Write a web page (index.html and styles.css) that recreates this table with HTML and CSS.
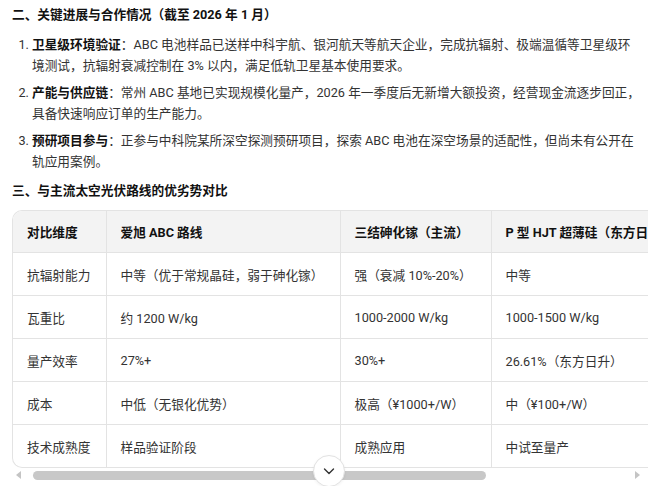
FILE: index.html
```html
<!DOCTYPE html>
<html lang="zh-CN">
<head>
<meta charset="utf-8">
<link rel="stylesheet" href="styles.css">
</head>
<body>
<div class="page">
  <h2 class="sec-title">二、关键进展与合作情况（截至 2026 年 1 月）</h2>
  <ol class="items">
    <li><strong>卫星级环境验证</strong>：ABC 电池样品已送样中科宇航、银河航天等航天企业，完成抗辐射、极端温循等卫星级环境测试，抗辐射衰减控制在 3% 以内，满足低轨卫星基本使用要求。</li>
    <li><strong>产能与供应链</strong>：常州 ABC 基地已实现规模化量产，2026 年一季度后无新增大额投资，经营现金流逐步回正，具备快速响应订单的生产能力。</li>
    <li><strong>预研项目参与</strong>：正参与中科院某所深空探测预研项目，探索 ABC 电池在深空场景的适配性，但尚未有公开在轨应用案例。</li>
  </ol>
  <h2 class="sec-title sec-title--second">三、与主流太空光伏路线的优劣势对比</h2>
  <div class="table-area">
    <div class="table-wrap">
      <table class="cmp">
        <colgroup>
          <col class="c1"><col class="c2"><col class="c3"><col class="c4">
        </colgroup>
        <thead>
          <tr><th>对比维度</th><th>爱旭 ABC 路线</th><th>三结砷化镓（主流）</th><th>P 型 HJT 超薄硅（东方日升）</th></tr>
        </thead>
        <tbody>
          <tr><td>抗辐射能力</td><td>中等（优于常规晶硅，弱于砷化镓）</td><td>强（衰减 10%-20%）</td><td>中等</td></tr>
          <tr><td>瓦重比</td><td>约 1200 W/kg</td><td>1000-2000 W/kg</td><td>1000-1500 W/kg</td></tr>
          <tr><td>量产效率</td><td>27%+</td><td>30%+</td><td>26.61%（东方日升）</td></tr>
          <tr><td>成本</td><td>中低（无银化优势）</td><td>极高（¥1000+/W）</td><td>中（¥100+/W）</td></tr>
          <tr><td>技术成熟度</td><td>样品验证阶段</td><td>成熟应用</td><td>中试至量产</td></tr>
        </tbody>
      </table>
    </div>
    <div class="scrollbar">
      <span class="arrow arrow--left"></span>
      <span class="thumb"></span>
      <span class="arrow arrow--right"></span>
    </div>
    <button class="down-btn" type="button" aria-label="向下">
      <svg width="14" height="14" viewBox="0 0 14 14"><path d="M2.5 5 L7 9.5 L11.5 5" fill="none" stroke="#333" stroke-width="1.4" stroke-linecap="round" stroke-linejoin="round"/></svg>
    </button>
  </div>
</div>
</body>
</html>
```

FILE: styles.css
```css
html, body {
  margin: 0;
  padding: 0;
  background: #ffffff;
  overflow: hidden;
}
body {
  font-family: "Roboto", "Noto Sans CJK SC", sans-serif;
  font-size: 12.7px;
  color: #333333;
}
.page {
  padding: 4px 0 0 12px;
}
.sec-title {
  margin: 0;
  font-size: 12.7px;
  line-height: 22px;
  font-weight: 700;
  color: #111111;
}
.sec-title--second {
  margin-top: 8px;
}
.items {
  margin: 8px 0 0 0;
  padding: 0 8px 0 20px;
}
.items li {
  line-height: 21px;
  margin-bottom: 6px;
}
.items li:last-child {
  margin-bottom: 0;
}
.items li::marker {
  color: #333333;
}
.items strong {
  color: #111111;
  font-weight: 700;
}
.table-area {
  position: relative;
  margin-top: 8px;
  height: 276px;
}
.table-wrap {
  overflow: hidden;
  border: 1px solid #e3e3e3;
  border-right: none;
  border-radius: 10px 0 0 10px;
}
.cmp {
  border-collapse: collapse;
  table-layout: fixed;
  width: 698px;
  white-space: nowrap;
}
.c1 { width: 93px; }
.c2 { width: 234px; }
.c3 { width: 151px; }
.c4 { width: 220px; }
.cmp th,
.cmp td {
  text-align: left;
  padding: 0 14px;
  border-left: 1px solid #e3e3e3;
  border-top: 1px solid #e3e3e3;
  overflow: hidden;
}
.cmp th:first-child,
.cmp td:first-child {
  border-left: none;
}
.cmp thead th {
  border-top: none;
  height: 41px;
  background: #f3f3f3;
  font-weight: 700;
  color: #111111;
}
.cmp td {
  height: 42px;
  color: #333333;
}
.scrollbar {
  display: flex;
  align-items: center;
  height: 14px;
  padding: 0 4px 0 4px;
  gap: 4px;
}
.thumb {
  display: block;
  margin-left: 8px;
  width: 453px;
  height: 9px;
  border-radius: 5px;
  background: #c8c8c8;
}
.arrow {
  display: block;
  width: 0;
  height: 0;
  border-top: 4px solid transparent;
  border-bottom: 4px solid transparent;
}
.arrow--left {
  border-right: 5px solid #c4c4c4;
}
.arrow--right {
  margin-left: auto;
  margin-right: 4px;
  border-left: 5px solid #c4c4c4;
}
.down-btn {
  position: absolute;
  left: 301px;
  top: 245px;
  width: 32px;
  height: 32px;
  border-radius: 50%;
  border: 1px solid #e2e2e2;
  background: #ffffff;
  box-shadow: 0 1px 3px rgba(0, 0, 0, 0.06);
  padding: 0;
  display: flex;
  align-items: center;
  justify-content: center;
}
```
